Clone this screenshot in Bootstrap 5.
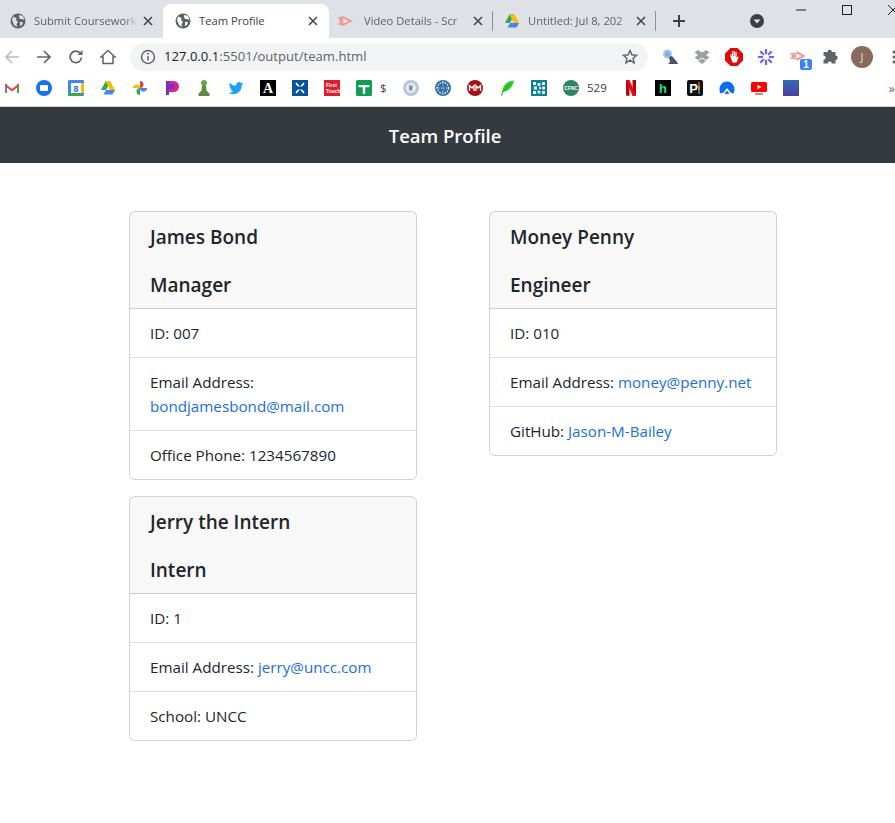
<!DOCTYPE html>
<html lang="en">
<head>
    <meta charset="UTF-8">
    <meta name="viewport" content="width=device-width, initial-scale=1.0">
    <title>Team Profile</title>
    <link href="https://cdn.jsdelivr.net/npm/bootstrap@5.3.0/dist/css/bootstrap.min.css" rel="stylesheet">
    <style>
        html, body { overflow: hidden; }
        body { font-family: "Open Sans", "Liberation Sans", sans-serif; color: #212529; background: #fff; }
        a { color: #1a6fdc; text-decoration: none; }

        /* browser chrome */
        .tab-strip { height: 38px; background: #dee1e6; white-space: nowrap; overflow: hidden; font-size: 11.2px; color: #5f6368; }
        .tab-item { flex: 0 0 163.5px; min-width: 0; height: 34px; margin-top: 4px; padding: 0 8px 0 10px; position: relative; }
        .tab-item.is-first { flex-basis: 163px; }
        .tab-item.is-active { flex-basis: 166px; background: #fff; border-radius: 8px 8px 0 0; color: #3c4043; padding-left: 12px; padding-right: 9px; }
        .tab-item.is-third { padding-left: 9px; }
        .tab-item.is-third .tab-title { margin-left: 10px; }
        .tab-item.is-fourth { padding-left: 11.5px; }
        .tab-item.has-sep::after { content: ""; position: absolute; right: 0; top: 7px; height: 20px; width: 1px; background: #8f9398; }
        .tab-title { flex: 1; min-width: 0; margin-left: 8px; -webkit-mask-image: linear-gradient(to right, #000 88%, transparent); mask-image: linear-gradient(to right, #000 88%, transparent); }
        .is-active .tab-title { -webkit-mask-image: none; mask-image: none; }
        .tab-x { flex: 0 0 14px; margin-left: 4px; }
        .strip-btn { flex: 0 0 32px; height: 34px; margin-top: 4px; }
        .new-tab { margin-left: 7px; }
        .tab-menu { margin-left: 46px; }
        .win-group { margin-left: 5px; flex: none; }
        .win-btn { width: 46px; height: 20px; flex: 0 0 46px; }
        .tool-row { height: 38px; background: #fff; margin-left: -4px; width: 904px; }
        .tool-btn { flex: 0 0 32px; height: 28px; position: relative; }
        .omni-box { flex: 0 0 518px; height: 28px; margin: 0 6px; background: #f1f3f4; border-radius: 14px; padding: 0 10px; font-size: 13.1px; color: #5f6368; }
        .omni-url { flex: 1; margin-left: 8px; }
        .omni-url b { font-weight: 400; color: #202124; }
        .ext-badge { position: absolute; right: 2px; bottom: 1px; width: 12px; height: 11px; background: #3b82f6; color: #fff; border-radius: 2px; font: 700 10px/11px "Liberation Sans", sans-serif; text-align: center; }
        .avatar-dot { width: 22px; height: 22px; border-radius: 50%; background: #8a6a5a; color: #e9ded8; font-size: 11px; line-height: 22px; text-align: center; }
        .mark-row { height: 31px; background: #fff; border-bottom: 1px solid #cfd1d4; font-size: 11.5px; color: #3c4043; overflow: hidden; }
        .mark-btn { flex: 0 0 32px; height: 24px; }
        .mark-btn.is-start { margin-left: -4px; }
        .mark-btn.with-label { padding-left: 8px; }
        .mark-btn.with-label svg { flex: none; }
        .mark-btn.with-label span { margin-left: 8px; }
        .mark-btn.label-dollar { flex-basis: 47px; }
        .mark-btn.label-num { flex-basis: 60px; }
        .mark-more { margin-left: auto; font-size: 13px; line-height: 24px; color: #5f6368; }

        /* page */
        .page-bar { height: 56px; padding: 2px 5px 0 0; background: #343a40; color: #fff; font-size: 18.5px; font-weight: 600; margin-bottom: 48px; }
        .team-col { padding-left: 41.5px; padding-right: 0; }
        .team-card { width: 288px; margin-bottom: 16px; }
        .team-card .card-header { padding: 13px 20px 11px; }
        .team-card h5 { font-size: 19px; line-height: 24px; font-weight: 600; margin: 0; }
        .team-card h5 + h5 { margin-top: 24px; }
        .team-card .list-group-item { padding: 12px 20px; color: #212529; font-size: 15.2px; line-height: 24px; }
    </style>
</head>
<body>

<!-- Browser tabs -->
<div class="tab-strip d-flex align-items-start">
    <div class="tab-item is-first d-flex align-items-center">
        <svg width="16" height="16" viewBox="0 0 16 16"><circle cx="8" cy="8" r="7.5" fill="#5f6368"/><path d="M3 3.500 6.500 5 6 7 8 9 6.500 11 7 14 4 12 2 7ZM9 2l4 1 1.500 4L12 6 10 6 9 4ZM10 9l3 0-1 3-2 1Z" fill="#dee1e6"/></svg>
        <span class="tab-title">Submit Coursework</span>
        <svg class="tab-x" width="14" height="14" viewBox="0 0 14 14"><path d="M3 3l8 8M11 3l-8 8" stroke="#45484c" stroke-width="1.6"/></svg>
    </div>
    <div class="tab-item is-active d-flex align-items-center">
        <svg width="16" height="16" viewBox="0 0 16 16"><circle cx="8" cy="8" r="7.5" fill="#5f6368"/><path d="M3 3.500 6.500 5 6 7 8 9 6.500 11 7 14 4 12 2 7ZM9 2l4 1 1.500 4L12 6 10 6 9 4ZM10 9l3 0-1 3-2 1Z" fill="#fff"/></svg>
        <span class="tab-title">Team Profile</span>
        <svg class="tab-x" width="14" height="14" viewBox="0 0 14 14"><path d="M3 3l8 8M11 3l-8 8" stroke="#45484c" stroke-width="1.6"/></svg>
    </div>
    <div class="tab-item is-third has-sep d-flex align-items-center">
        <svg width="16" height="16" viewBox="0 0 16 16"><path d="M0 4h3l2-1 10 5-10 5-2-1H0l2-4Z" fill="#f49a94"/><path d="M5.500 5.500 10 8l-4.500 2.500Z" fill="#fff"/></svg>
        <span class="tab-title">Video Details - Scr</span>
        <svg class="tab-x" width="14" height="14" viewBox="0 0 14 14"><path d="M3 3l8 8M11 3l-8 8" stroke="#45484c" stroke-width="1.6"/></svg>
    </div>
    <div class="tab-item is-fourth has-sep d-flex align-items-center">
        <svg width="16" height="16" viewBox="0 0 16 16"><path d="M5.500 1.500h5L6 10H1Z" fill="#34a853"/><path d="M5.500 1.500h5L15 10h-5Z" fill="#fbbc04"/><path d="M3.500 14.500 6 10h9l-2.500 4.500Z" fill="#4285f4"/></svg>
        <span class="tab-title">Untitled: Jul 8, 202</span>
        <svg class="tab-x" width="14" height="14" viewBox="0 0 14 14"><path d="M3 3l8 8M11 3l-8 8" stroke="#45484c" stroke-width="1.6"/></svg>
    </div>
    <div class="strip-btn new-tab d-flex align-items-center justify-content-center">
        <svg width="14" height="14" viewBox="0 0 14 14"><path d="M7 1v12M1 7h12" stroke="#3c4043" stroke-width="2"/></svg>
    </div>
    <div class="strip-btn tab-menu d-flex align-items-center justify-content-center">
        <svg width="16" height="16" viewBox="0 0 16 16"><circle cx="8" cy="8" r="7" fill="#3c4043"/><path d="M4.500 6.500h7L8 10.500Z" fill="#dee1e6"/></svg>
    </div>
    <div class="win-group d-flex">
        <div class="win-btn d-flex align-items-center justify-content-center">
            <svg width="10" height="10" viewBox="0 0 10 10"><path d="M0 5h10" stroke="#202124"/></svg>
        </div>
        <div class="win-btn d-flex align-items-center justify-content-center">
            <svg width="10" height="10" viewBox="0 0 10 10"><rect x=".5" y=".5" width="9" height="9" fill="none" stroke="#202124"/></svg>
        </div>
        <div class="win-btn d-flex align-items-center justify-content-center">
            <svg width="10" height="10" viewBox="0 0 10 10"><path d="M0 0l10 10M10 0 0 10" stroke="#202124"/></svg>
        </div>
    </div>
</div>

<!-- Address bar -->
<div class="tool-row d-flex align-items-center">
    <div class="tool-btn d-flex align-items-center justify-content-center">
        <svg width="16" height="16" viewBox="0 0 16 16"><path d="M15 8H2M8 2 2 8l6 6" fill="none" stroke="#b9bbbe" stroke-width="1.700"/></svg>
    </div>
    <div class="tool-btn d-flex align-items-center justify-content-center">
        <svg width="16" height="16" viewBox="0 0 16 16"><path d="M1 8h13M8 2l6 6-6 6" fill="none" stroke="#5f6368" stroke-width="1.700"/></svg>
    </div>
    <div class="tool-btn d-flex align-items-center justify-content-center">
        <svg width="16" height="16" viewBox="0 0 16 16"><path d="M13.500 8.500A5.700 5.700 0 1 1 12 4" fill="none" stroke="#5f6368" stroke-width="1.700"/><path d="M14.500 1v5h-5Z" fill="#5f6368"/></svg>
    </div>
    <div class="tool-btn d-flex align-items-center justify-content-center">
        <svg width="16" height="16" viewBox="0 0 16 16"><path d="M8 1.500 1 8h2v6.500h10V8h2Z" fill="none" stroke="#5f6368" stroke-width="1.500"/></svg>
    </div>
    <div class="omni-box d-flex align-items-center">
        <svg width="16" height="16" viewBox="0 0 16 16"><circle cx="8" cy="8" r="6.500" fill="none" stroke="#5f6368" stroke-width="1.400"/><path d="M8 7v4.500" stroke="#5f6368" stroke-width="1.500"/><circle cx="8" cy="4.800" r="1" fill="#5f6368"/></svg>
        <span class="omni-url"><b>127.0.0.1</b>:5501/output/team.html</span>
        <svg width="16" height="16" viewBox="0 0 16 16"><path d="M8 1.500l1.900 4.300 4.600.5-3.400 3.100 1 4.600L8 11.200l-4.100 2.800 1-4.600L1.500 6.300l4.600-.5Z" fill="none" stroke="#5f6368" stroke-width="1.400"/></svg>
    </div>
    <div class="tool-btn d-flex align-items-center justify-content-center">
        <svg width="18" height="18" viewBox="0 0 18 18"><circle cx="6.500" cy="6" r="4.500" fill="#a5c8e4"/><circle cx="6.500" cy="6" r="2.500" fill="#7fb2d8"/><path d="M8 9l3-1 5 6 1 2H7l2-2Z" fill="#44546a"/></svg>
    </div>
    <div class="tool-btn d-flex align-items-center justify-content-center">
        <svg width="16" height="16" viewBox="0 0 16 16"><path d="M4 1 .5 3.500 4 6 .5 8.500 4 11l4-2.500L12 11l3.500-2.500L12 6l3.500-2.500L12 1 8 3.500ZM4 12l4 3 4-3-4-2.500Z" fill="#9aa0a6"/></svg>
    </div>
    <div class="tool-btn d-flex align-items-center justify-content-center">
        <svg width="18" height="18" viewBox="0 0 18 18"><path d="M5.500 0h7L18 5.500v7L12.500 18h-7L0 12.500v-7Z" fill="#dd0c0c"/><path d="M5.500 9V6h1v2h.5V3.500h1.200V8h.5V3h1.200v5h.5V4h1.200v6l1-1.500 1 .6-2 5.400H7.500Z" fill="#fff"/></svg>
    </div>
    <div class="tool-btn d-flex align-items-center justify-content-center">
        <svg width="18" height="18" viewBox="0 0 18 18"><g stroke="#6a63e8" stroke-width="2.200"><path d="M9 1v16M1 9h16M3.300 3.300l11.400 11.400M14.700 3.300 3.300 14.700"/></g><circle cx="9" cy="9" r="3" fill="#fff"/></svg>
    </div>
    <div class="tool-btn d-flex align-items-center justify-content-center">
        <svg width="18" height="18" viewBox="0 0 18 18"><path d="M1 5h6l1-2 9 5-9 5-1-2H1l2-3Z" fill="#f4a0a0"/><path d="M7 5.500 12.500 8 7 10.500Z" fill="#fff"/></svg>
        <span class="ext-badge">1</span>
    </div>
    <div class="tool-btn d-flex align-items-center justify-content-center">
        <svg width="16" height="16" viewBox="0 0 16 16"><path d="M5.500 3a2.200 2.200 0 0 1 4.400 0h3.600v3.600a2.200 2.200 0 0 1 0 4.400v3.500H9.800a2 2 0 0 0-4 0H1.500v-3.700a2.100 2.100 0 0 0 0-4.200V3Z" fill="#5f6368"/></svg>
    </div>
    <div class="tool-btn d-flex align-items-center justify-content-center">
        <div class="avatar-dot">J</div>
    </div>
    <div class="tool-btn d-flex align-items-center justify-content-center">
        <svg width="16" height="16" viewBox="0 0 16 16"><g fill="#5f6368"><circle cx="8" cy="3" r="1.500"/><circle cx="8" cy="8" r="1.500"/><circle cx="8" cy="13" r="1.500"/></g></svg>
    </div>
</div>

<!-- Bookmarks -->
<div class="mark-row d-flex align-items-start">
    <div class="mark-btn is-start d-flex align-items-center justify-content-center"><svg width="16" height="16" viewBox="0 0 16 16"><path d="M1 13V4h2v9Z" fill="#4285f4"/><path d="M13 13V4h2v9Z" fill="#34a853"/><path d="M1 3.500 8 9l7-5.500V6L8 11.500 1 6Z" fill="#ea4335"/></svg></div>
    <div class="mark-btn d-flex align-items-center justify-content-center"><svg width="16" height="16" viewBox="0 0 16 16"><circle cx="8" cy="8" r="8" fill="#1a73e8"/><rect x="4" y="5" width="8" height="6" rx="1" fill="#fff"/></svg></div>
    <div class="mark-btn d-flex align-items-center justify-content-center"><svg width="16" height="16" viewBox="0 0 16 16"><rect width="16" height="16" rx="1" fill="#4285f4"/><rect x="3" y="3" width="10" height="10" fill="#fff"/><path d="M0 13h13v3H1a1 1 0 0 1-1-1Z" fill="#34a853"/><path d="M13 3h3v10h-3Z" fill="#fbbc04"/><text x="8" y="11.500" font-size="9" font-weight="700" text-anchor="middle" fill="#1a73e8" font-family="Liberation Sans">8</text></svg></div>
    <div class="mark-btn d-flex align-items-center justify-content-center"><svg width="16" height="16" viewBox="0 0 16 16"><path d="M5.500 1.500h5L6 10H1Z" fill="#34a853"/><path d="M5.500 1.500h5L15 10h-5Z" fill="#fbbc04"/><path d="M3.500 14.500 6 10h9l-2.500 4.500Z" fill="#4285f4"/></svg></div>
    <div class="mark-btn d-flex align-items-center justify-content-center"><svg width="16" height="16" viewBox="0 0 16 16"><path d="M8 8V1a3.500 3.500 0 0 1 0 7Z" fill="#ea4335"/><path d="M8 8h7a3.500 3.500 0 0 1-7 0Z" fill="#4285f4"/><path d="M8 8v7a3.500 3.500 0 0 1 0-7Z" fill="#34a853"/><path d="M8 8H1a3.500 3.500 0 0 1 7 0Z" fill="#fbbc04"/></svg></div>
    <div class="mark-btn d-flex align-items-center justify-content-center"><svg width="16" height="16" viewBox="0 0 16 16"><path d="M2 1h3v14H2Z" fill="#7b2fbe"/><path d="M5 1h4.500a5.500 5.500 0 0 1 0 11H5Z" fill="#e0218a"/><path d="M5 4h3a2.500 2.500 0 0 1 0 5H5Z" fill="#6a35c9"/></svg></div>
    <div class="mark-btn d-flex align-items-center justify-content-center"><svg width="16" height="16" viewBox="0 0 16 16"><circle cx="8" cy="3" r="3" fill="#6aa84f"/><path d="M6 5.500h4l.5 5 3 3V16h-11v-2.500l3-3Z" fill="#5b8c3e"/></svg></div>
    <div class="mark-btn d-flex align-items-center justify-content-center"><svg width="16" height="16" viewBox="0 0 16 16"><path d="M15.500 3.500c-.6.300-1.100.4-1.700.5.600-.4 1-.9 1.300-1.600-.6.300-1.200.6-1.900.7a3 3 0 0 0-5.100 2.700C5.600 5.700 3.400 4.600 1.900 2.700c-.8 1.400-.4 3.100.9 4-.5 0-.9-.1-1.300-.4 0 1.500 1 2.700 2.400 3-.4.100-.9.100-1.300 0 .4 1.200 1.500 2 2.800 2.100A6 6 0 0 1 .5 12.700 8.500 8.500 0 0 0 13.700 5c.7-.4 1.300-1 1.800-1.500Z" fill="#1da1f2"/></svg></div>
    <div class="mark-btn d-flex align-items-center justify-content-center"><svg width="16" height="16" viewBox="0 0 16 16"><rect width="16" height="16" fill="#000"/><text x="8" y="13" font-size="14" font-weight="700" text-anchor="middle" fill="#fff" font-family="Liberation Serif">A</text></svg></div>
    <div class="mark-btn d-flex align-items-center justify-content-center"><svg width="16" height="16" viewBox="0 0 16 16"><rect width="16" height="16" fill="#07539b"/><path d="M4 3l8 10M12 3 4 13" stroke="#fff" stroke-width="1.800"/><path d="M4 8h8" stroke="#07539b" stroke-width="3"/></svg></div>
    <div class="mark-btn d-flex align-items-center justify-content-center"><svg width="16" height="16" viewBox="0 0 16 16"><rect width="16" height="16" fill="#e31b2d"/><text x="2" y="7" font-size="5" font-weight="700" fill="#fff" font-family="Liberation Sans">First</text><text x="2" y="13" font-size="5" font-weight="700" fill="#fff" font-family="Liberation Sans">Touch</text></svg></div>
    <div class="mark-btn with-label label-dollar d-flex align-items-center"><svg width="16" height="16" viewBox="0 0 16 16"><rect width="16" height="16" rx="1.500" fill="#0f9d58"/><path d="M2.500 5h11v2.200h-4.300V14H6.800V7.200H2.500Z" fill="#fff"/></svg><span>$</span></div>
    <div class="mark-btn d-flex align-items-center justify-content-center"><svg width="16" height="16" viewBox="0 0 16 16"><circle cx="8" cy="8" r="8" fill="#b9c6d8"/><circle cx="8" cy="8" r="5" fill="#e7ecf2"/><path d="M6 5l4 1-1 5-3-1Z" fill="#7f93ad"/></svg></div>
    <div class="mark-btn d-flex align-items-center justify-content-center"><svg width="16" height="16" viewBox="0 0 16 16"><circle cx="8" cy="8" r="8" fill="#2f6ca3"/><circle cx="8" cy="8" r="5.500" fill="none" stroke="#e4edf5" stroke-width="1.400" stroke-dasharray="1.500 1.200"/><path d="M1 8h14M8 1v14" stroke="#dbe7f2" stroke-dasharray="1 1.500"/></svg></div>
    <div class="mark-btn d-flex align-items-center justify-content-center"><svg width="16" height="16" viewBox="0 0 16 16"><circle cx="8" cy="8" r="8" fill="#a30f14"/><path d="M2.500 11V5.500L5 8l2-2.500V11M9 11V5.500L11 8l2.500-2.500V11" fill="none" stroke="#fff" stroke-width="1.300"/></svg></div>
    <div class="mark-btn d-flex align-items-center justify-content-center"><svg width="16" height="16" viewBox="0 0 16 16"><path d="M15 .5C9 1 4.500 4.500 3.500 10L2 15.500 3 16l1.500-4.500C10 11 14 7 15 .5Z" fill="#2ecc2e"/><path d="M4 12 11 4" stroke="#0d8a0d" stroke-width=".8"/></svg></div>
    <div class="mark-btn d-flex align-items-center justify-content-center"><svg width="16" height="16" viewBox="0 0 16 16"><rect width="16" height="16" fill="#0b7f95"/><g fill="#dff2f5"><rect x="2" y="2" width="3" height="3"/><rect x="6.500" y="3" width="3" height="3"/><rect x="11" y="2" width="3" height="3"/><rect x="3" y="6.500" width="3" height="3"/><rect x="8" y="7" width="2" height="2"/><rect x="11" y="6.500" width="3" height="3"/><rect x="2" y="11" width="3" height="3"/><rect x="6.500" y="10.500" width="3" height="3"/><rect x="11" y="11" width="3" height="3"/></g></svg></div>
    <div class="mark-btn with-label label-num d-flex align-items-center"><svg width="16" height="16" viewBox="0 0 16 16"><circle cx="8" cy="8" r="8" fill="#2e8462"/><text x="8" y="10" font-size="4.800" font-weight="700" text-anchor="middle" fill="#fff" font-family="Liberation Sans">CFNC</text></svg><span>529</span></div>
    <div class="mark-btn d-flex align-items-center justify-content-center"><svg width="16" height="16" viewBox="0 0 16 16"><path d="M3 0h3.500v16L3 15.500Z" fill="#b20710"/><path d="M9.500 0H13v15.500L9.500 16Z" fill="#b20710"/><path d="M3 0h3.500L13 15.500 9.500 16Z" fill="#e50914"/></svg></div>
    <div class="mark-btn d-flex align-items-center justify-content-center"><svg width="16" height="16" viewBox="0 0 16 16"><rect width="16" height="16" fill="#000"/><text x="8" y="13" font-size="13" font-weight="700" text-anchor="middle" fill="#1ce783" font-family="Liberation Sans">h</text></svg></div>
    <div class="mark-btn d-flex align-items-center justify-content-center"><svg width="16" height="16" viewBox="0 0 16 16"><rect width="16" height="16" rx="2" fill="#111"/><text x="6.500" y="13" font-size="13" font-weight="700" text-anchor="middle" fill="#fff" font-family="Liberation Sans">P</text><path d="M12 2v4" stroke="#ef4136" stroke-width="1.500"/><path d="M12 6v4" stroke="#f9c21a" stroke-width="1.500"/><path d="M12 10v4" stroke="#2aa7e0" stroke-width="1.500"/></svg></div>
    <div class="mark-btn d-flex align-items-center justify-content-center"><svg width="16" height="16" viewBox="0 0 16 16"><path d="M8 1.500c4 0 7.500 3.500 7.500 8 0 1.500-.5 3-1 4l-3-1L8 8l-3.500 4.500-3 1c-.5-1-1-2.500-1-4 0-4.500 3.500-8 7.500-8Z" fill="#0a6cf0"/><path d="M8 10.500l2.500 3.500H5.500Z" fill="#0a6cf0"/></svg></div>
    <div class="mark-btn d-flex align-items-center justify-content-center"><svg width="16" height="16" viewBox="0 0 16 16"><rect y="2" width="16" height="10" rx="1.500" fill="#f00"/><path d="M4 13.500h8v1H4Z" fill="#c00"/><path d="M6.500 4.700 10.500 7l-4 2.300Z" fill="#fff"/></svg></div>
    <div class="mark-btn d-flex align-items-center justify-content-center"><svg width="16" height="16" viewBox="0 0 16 16"><defs><linearGradient id="sq-grad" x1="0" y1="0" x2="0" y2="1"><stop offset="0" stop-color="#2f6bb5"/><stop offset="1" stop-color="#4a3fa0"/></linearGradient></defs><rect width="16" height="16" fill="url(#sq-grad)"/></svg></div>
    <span class="mark-more">»</span>
</div>

<!-- Page header -->
<header class="page-bar d-flex align-items-center justify-content-center">Team Profile</header>

<div class="container">
    <div class="row">
        <div class="col-6 team-col">
            <div class="card team-card">
                <div class="card-header">
                    <h5>James Bond</h5>
                    <h5>Manager</h5>
                </div>
                <ul class="list-group list-group-flush">
                    <li class="list-group-item">ID: 007</li>
                    <li class="list-group-item">Email Address: <a href="#">bondjamesbond@mail.com</a></li>
                    <li class="list-group-item">Office Phone: 1234567890</li>
                </ul>
            </div>
            <div class="card team-card">
                <div class="card-header">
                    <h5>Jerry the Intern</h5>
                    <h5>Intern</h5>
                </div>
                <ul class="list-group list-group-flush">
                    <li class="list-group-item">ID: 1</li>
                    <li class="list-group-item">Email Address: <a href="#">jerry@uncc.com</a></li>
                    <li class="list-group-item">School: UNCC</li>
                </ul>
            </div>
        </div>
        <div class="col-6 team-col">
            <div class="card team-card">
                <div class="card-header">
                    <h5>Money Penny</h5>
                    <h5>Engineer</h5>
                </div>
                <ul class="list-group list-group-flush">
                    <li class="list-group-item">ID: 010</li>
                    <li class="list-group-item">Email Address: <a href="#">money@penny.net</a></li>
                    <li class="list-group-item">GitHub: <a href="#">Jason-M-Bailey</a></li>
                </ul>
            </div>
        </div>
    </div>
</div>

</body>
</html>
